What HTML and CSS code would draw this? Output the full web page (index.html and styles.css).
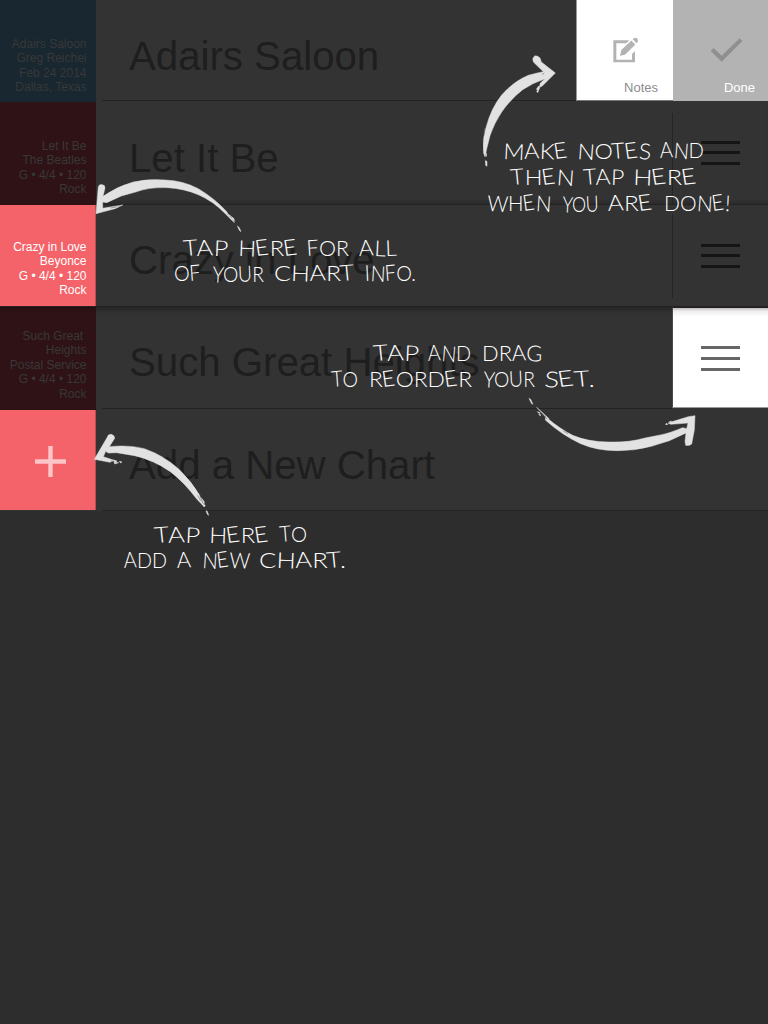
FILE: index.html
```html
<!DOCTYPE html>
<html lang="en">
<head>
<meta charset="utf-8">
<title>Set List</title>
<link rel="stylesheet" href="styles.css">
</head>
<body>
<main class="setlist">
  <section class="row row-head">
    <div class="meta meta-blue">Adairs Saloon<br>Greg Reichel<br>Feb 24 2014<br>Dallas, Texas</div>
    <h1 class="title">Adairs Saloon</h1>
    <div class="actions">
      <button class="action notes">
        <svg class="icon" viewBox="0 0 78 78" width="26" height="26"><path d="M52 10H4v66h65V42l-9 9v17H13V19h30z"/><path d="M24 56l4-17 31-29 12 12-32 31z"/><path class="cut" d="M57 8l16 16"/><path d="M62 7q5-8 13-3 6 6-1 15z"/></svg>
        <span>Notes</span>
      </button>
      <button class="action done">
        <svg class="icon" viewBox="0 0 99 78" width="33" height="26"><path d="M2 42l9-9 24 23L89 4l8 8-62 62z"/></svg>
        <span>Done</span>
      </button>
    </div>
  </section>
  <section class="row row-two">
    <div class="meta meta-dark">Let It Be<br>The Beatles<br>G • 4/4 • 120<br>Rock</div>
    <h2 class="title">Let It Be</h2>
    <div class="handle"><i></i><i></i><i></i></div>
  </section>
  <section class="row row-three">
    <div class="meta meta-lit">Crazy in Love<br>Beyonce<br>G • 4/4 • 120<br>Rock</div>
    <h2 class="title">Crazy in Love</h2>
    <div class="handle"><i></i><i></i><i></i></div>
  </section>
  <section class="row row-four">
    <div class="meta meta-dark">Such Great&nbsp;<br>Heights<br>Postal Service<br>G • 4/4 • 120<br>Rock</div>
    <h2 class="title">Such Great Heights</h2>
    <div class="handle handle-lit"><i></i><i></i><i></i></div>
  </section>
  <section class="row row-add">
    <div class="add"><svg viewBox="0 0 31 31" width="31" height="31"><path d="M13.3 0h4.4v13.3H31v4.4H17.7V31h-4.4V17.7H0v-4.4h13.3z"/></svg></div>
    <h2 class="title">Add a New Chart</h2>
  </section>
</main>

<svg class="coach" viewBox="0 0 768 1024" width="768" height="1024">
  <g class="arrow" transform="translate(460 40) scale(.33333)">
    <path d="M71 340Q66 300 78 263Q93 205 125 165Q160 125 205 106Q230 99 250 95L221 67Q215 54 224 48Q232 46 240 54L244 66L286 99L246 139L238 142L241 129L255 116Q220 128 188 149Q153 176 125 216Q102 251 90 287L80 327L75 350z"/>
    <path d="M236 138l3 6-6 14-3-4 4-5-5-1zM77 337l3 8-2 5zM76 362l5 2v15l-4-3z"/>
    <path class="scratch" d="M74 265l-2 20M246 104l7-5"/>
  </g>
  <g class="arrow" transform="translate(90 170) scale(.33333)">
    <path d="M25 50Q28 42 36 44Q45 44 45 54L39 79Q82 49 130 36Q175 26 225 30Q279 32 325 56Q376 87 411 126L414 134L433 158L406 131Q368 92 325 74Q283 56 233 53Q177 51 137 66L94 78L50 98L38 96L38 115L80 108L98 105L75 116L45 124L18 131z"/>
    <path d="M413 131l18 14 3 9-14-10zM442 168l6 5 5 12-5-4z"/>
    <path class="scratch" d="M62 114l17-3M77 108l14-1M418 139l9 5"/>
  </g>
  <g class="arrow" transform="translate(520 390) scale(.33333)">
    <path d="M50 52L88 87L82 85Q125 120 158 136Q208 157 270 156Q327 158 375 144L425 134Q447 130 488 113L500 116L504 99L452 103L444 99L470 91L505 80L525 77L523 120L515 162Q508 168 497 166L495 154L498 129L448 152L394 169Q343 183 290 182Q231 182 182 161Q127 136 76 90L77 80z"/>
    <path d="M27 25l5 3 7 15-5-3zM52 65l8 3-2 3zM56 73l6 1-1 4zM436 103l5-3 2 4zM448 95l6-2-2 4z"/>
    <path class="scratch" d="M82 88l-20-22M130 123l14 8"/>
  </g>
  <g class="arrow" transform="translate(90 425) scale(.33333)">
    <path d="M51 38Q54 27 64 28Q74 31 74 40L58 65Q116 59 163 71Q221 91 267 133Q305 170 329 211L333 224L343 246L321 223Q282 171 241 140Q191 105 134 92L80 83L55 84L47 79L40 95L72 106L60 112L13 103z"/>
    <path d="M71 105l10 3-4 4 9 1-12 4zM88 109l8 2-4 3zM333 218l10 12-1 8zM337 236l9 5-3 4zM348 257l4 2 4 12-4-3z"/>
    <path class="scratch" d="M323 211l9 16M62 108l10 2"/>
  </g>

  <g class="hand">
    <text x="503" y="159" textLength="65" lengthAdjust="spacingAndGlyphs" rotate="3 -3 2 -8">MAKE</text><text x="577" y="159" textLength="74" lengthAdjust="spacingAndGlyphs" rotate="4 0 -4 -8 3">NOTES</text><text x="660" y="158" textLength="44" lengthAdjust="spacingAndGlyphs" rotate="-3 5 0">AND</text>
    <text x="511" y="185" textLength="63" lengthAdjust="spacingAndGlyphs" rotate="-5 0 -8 4">THEN</text><text x="584" y="185" textLength="40" lengthAdjust="spacingAndGlyphs" rotate="-5 -3 2">TAP</text><text x="633" y="185" textLength="64" lengthAdjust="spacingAndGlyphs" rotate="2 -8 0 -8">HERE</text>
    <text x="487" y="211" textLength="64" lengthAdjust="spacingAndGlyphs" rotate="3 0 -8 4">WHEN</text><text x="562" y="212" textLength="37" lengthAdjust="spacingAndGlyphs" rotate="4 0 -3">YOU</text><text x="608" y="211" textLength="45" lengthAdjust="spacingAndGlyphs" rotate="-3 0 -8">ARE</text><text x="664" y="211" textLength="66" lengthAdjust="spacingAndGlyphs" rotate="0 0 4 -8 3">DONE!</text>

    <text x="184" y="256" textLength="44" lengthAdjust="spacingAndGlyphs" rotate="-5 -3 2">TAP</text><text x="238" y="256" textLength="60" lengthAdjust="spacingAndGlyphs" rotate="2 -8 0 -8">HERE</text><text x="307" y="256" textLength="42" lengthAdjust="spacingAndGlyphs" rotate="-4 0 0">FOR</text><text x="359" y="256" textLength="38" lengthAdjust="spacingAndGlyphs" rotate="-3 3 -2">ALL</text>
    <text x="174" y="281" textLength="27" lengthAdjust="spacingAndGlyphs" rotate="0 -5">OF</text><text x="212" y="282" textLength="52" lengthAdjust="spacingAndGlyphs" rotate="4 0 -3 0">YOUR</text><text x="274" y="281" textLength="81" lengthAdjust="spacingAndGlyphs" rotate="0 2 -3 0 -5">CHART</text><text x="365" y="281" textLength="51" lengthAdjust="spacingAndGlyphs" rotate="-3 4 -5 0 0">INFO.</text>

    <text x="374" y="361" textLength="45" lengthAdjust="spacingAndGlyphs" rotate="-5 -3 2">TAP</text><text x="428" y="361" textLength="43" lengthAdjust="spacingAndGlyphs" rotate="-3 5 0">AND</text><text x="482" y="361" textLength="60" lengthAdjust="spacingAndGlyphs" rotate="0 0 -3 2">DRAG</text>
    <text x="332" y="387" textLength="26" lengthAdjust="spacingAndGlyphs" rotate="-5 0">TO</text><text x="369" y="387" textLength="103" lengthAdjust="spacingAndGlyphs" rotate="0 -8 0 0 0 -8 0">REORDER</text><text x="483" y="387" textLength="52" lengthAdjust="spacingAndGlyphs" rotate="4 0 -3 0">YOUR</text><text x="544" y="387" textLength="51" lengthAdjust="spacingAndGlyphs" rotate="3 -8 -5 0">SET.</text>

    <text x="155" y="543" textLength="45" lengthAdjust="spacingAndGlyphs" rotate="-5 -3 2">TAP</text><text x="209" y="543" textLength="60" lengthAdjust="spacingAndGlyphs" rotate="2 -8 0 -8">HERE</text><text x="280" y="542" textLength="27" lengthAdjust="spacingAndGlyphs" rotate="-5 0">TO</text>
    <text x="124" y="568" textLength="43" lengthAdjust="spacingAndGlyphs" rotate="-3 0 0">ADD</text><text x="177" y="568" rotate="-3">A</text><text x="202" y="568" textLength="48" lengthAdjust="spacingAndGlyphs" rotate="4 -8 2">NEW</text><text x="259" y="568" textLength="87" lengthAdjust="spacingAndGlyphs" rotate="0 2 -3 0 -5 0">CHART.</text>
  </g>
</svg>
</body>
</html>
```

FILE: styles.css
```css
* { box-sizing: border-box; }

body {
  margin: 0;
  width: 768px;
  height: 1024px;
  overflow: hidden;
  position: relative;
  background: #2d2d2d;
  font-family: "Liberation Sans", Arial, sans-serif;
}

.setlist { display: flex; flex-direction: column; }

.row {
  display: grid;
  grid-template-columns: 96px 1fr auto;
  background: #333;
}
.row-head { height: 102px; }
.row-two { height: 103px; }
.row-three { height: 102px; }
.row-four { height: 103px; }
.row-add { height: 101px; }

.title {
  margin: 0 0 0 6px;
  padding: 33px 0 0 27px;
  font-size: 40.2px;
  line-height: 48px;
  font-weight: 400;
  color: #1e1e1e;
  white-space: nowrap;
}
.row-head .title { height: 101px; border-bottom: 1px solid #232323; }
.row-three .title { padding-top: 32px; }
.row-four .title { height: 102px; padding-top: 32px; border-bottom: 1px solid #232323; }
.row-add .title { grid-column: 2 / 4; padding-top: 32px; border-bottom: 1px solid #242424; }

.row-two { box-shadow: inset 0 -1px #232323, inset 0 -5px 4px -3px #262626; }
.row-three { box-shadow: inset 0 -1px #272022; }
.row-four { box-shadow: inset 0 6px 5px -3px #252525; }

.meta {
  display: flow-root;
  padding: 37px 9.5px 0 0;
  font-size: 12px;
  line-height: 14.4px;
  text-align: right;
  white-space: nowrap;
  color: #383838;
}
.meta-blue { background: #182730; }
.meta-dark { background: #2f1215; }
.meta-lit {
  height: 101px;
  padding-top: 35px;
  background: #f5636a;
  border-right: 1px solid #b84e54;
  padding-right: 8.5px;
  color: #fff;
}
.row-four .meta { padding-top: 22px; box-shadow: inset 0 6px 5px -5px #200c0f; }

.actions { display: grid; grid-template-columns: 97px 95px; }
.action {
  display: flex;
  flex-direction: column;
  align-items: center;
  margin: 0;
  border: 0;
  padding: 37px 0 0;
  height: 101px;
  font: 13px/16px "Liberation Sans", Arial, sans-serif;
}
.action span { align-self: flex-end; margin-top: 17px; }
.icon { display: block; flex: none; }
.notes {
  background: #fff;
  color: #8c8c8c;
  border-left: 1px solid #999;
  border-bottom: 1px solid #777;
}
.notes .icon { fill: #b3b3b3; }
.notes .cut { stroke: #fff; stroke-width: 3; }
.notes span { padding-right: 15px; }
.done { background: #b3b3b3; color: #fff; padding-left: 12px; }
.done .icon { fill: #8f8f8f; }
.done span { padding-right: 13px; }

.handle {
  display: flex;
  flex-direction: column;
  align-items: center;
  width: 96px;
  padding-top: 39px;
  background: linear-gradient(#252525, #252525) 0 11px / 1px 91px no-repeat;
}
.row-three .handle { background-size: 1px 84px; background-position: 0 9px; }
.handle i { width: 39px; height: 3px; background: #151515; }
.handle i + i { margin-top: 7px; }
.handle i:last-child { margin-top: 8px; }
.handle-lit {
  height: 101px;
  border-left: 1px solid #4a4a4a;
  border-top: 1px solid #272022;
  border-bottom: 1px solid #999;
  padding-top: 38px;
  background: linear-gradient(#bbb, #eee 3px, #fff 9px);
}
.handle-lit i { background: #666; }
.handle-lit i + i { margin-top: 8px; }

.add {
  display: flex;
  justify-content: center;
  padding: 36px 0 0 6px;
  height: 100px;
  background: #f5636a;
  border-right: 1px solid #b84e54;
}
.add path { fill: #fcc5c8; }

/* Hints drawn over the list */
.coach { position: absolute; top: 0; left: 0; pointer-events: none; }
.arrow { fill: #e2e2e2; stroke: #e2e2e2; stroke-width: 1.5; }
.arrow .scratch { fill: none; stroke: #777; stroke-width: 2; }
.hand text {
  font-family: Lato, "Open Sans", sans-serif;
  font-weight: 300;
  font-size: 22px;
  fill: #fff;
}
```
